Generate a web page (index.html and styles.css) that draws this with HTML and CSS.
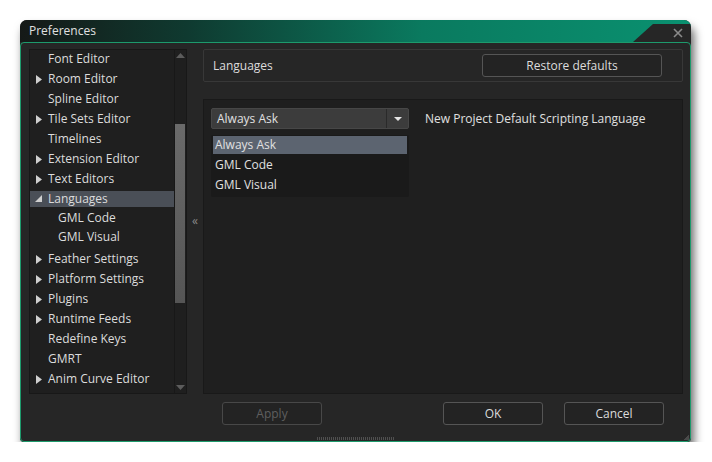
FILE: index.html
```html
<!DOCTYPE html>
<html>
<head>
<meta charset="utf-8">
<link rel="stylesheet" href="styles.css">
</head>
<body>
<div class="window">
  <div class="titlebar">
    <span class="title">Preferences</span>
    <div class="notch">
      <svg class="close" width="10" height="10" viewBox="0 0 10 10"><path d="M1 1L9 9M9 1L1 9" stroke="#8a8a8a" stroke-width="1.6"/></svg>
    </div>
  </div>
  <div class="body">
    <div class="main">
      <div class="tree">
        <div class="tree-list">
          <div class="row"><span class="tw"></span>Font Editor</div>
          <div class="row"><span class="tw"><svg width="6" height="9" viewBox="0 0 6 9"><path d="M0 0L6 4.5L0 9Z" fill="#cfcfcf"/></svg></span>Room Editor</div>
          <div class="row"><span class="tw"></span>Spline Editor</div>
          <div class="row"><span class="tw"><svg width="6" height="9" viewBox="0 0 6 9"><path d="M0 0L6 4.5L0 9Z" fill="#cfcfcf"/></svg></span>Tile Sets Editor</div>
          <div class="row"><span class="tw"></span>Timelines</div>
          <div class="row"><span class="tw"><svg width="6" height="9" viewBox="0 0 6 9"><path d="M0 0L6 4.5L0 9Z" fill="#cfcfcf"/></svg></span>Extension Editor</div>
          <div class="row"><span class="tw"><svg width="6" height="9" viewBox="0 0 6 9"><path d="M0 0L6 4.5L0 9Z" fill="#cfcfcf"/></svg></span>Text Editors</div>
          <div class="row selected"><span class="tw"><svg width="8" height="8" viewBox="0 0 8 8"><path d="M7 0L7 7L0 7Z" fill="#cfcfcf"/></svg></span>Languages</div>
          <div class="row child">GML Code</div>
          <div class="row child tall">GML Visual</div>
          <div class="row gapped"><span class="tw"><svg width="6" height="9" viewBox="0 0 6 9"><path d="M0 0L6 4.5L0 9Z" fill="#cfcfcf"/></svg></span>Feather Settings</div>
          <div class="row"><span class="tw"><svg width="6" height="9" viewBox="0 0 6 9"><path d="M0 0L6 4.5L0 9Z" fill="#cfcfcf"/></svg></span>Platform Settings</div>
          <div class="row"><span class="tw"><svg width="6" height="9" viewBox="0 0 6 9"><path d="M0 0L6 4.5L0 9Z" fill="#cfcfcf"/></svg></span>Plugins</div>
          <div class="row"><span class="tw"><svg width="6" height="9" viewBox="0 0 6 9"><path d="M0 0L6 4.5L0 9Z" fill="#cfcfcf"/></svg></span>Runtime Feeds</div>
          <div class="row"><span class="tw"></span>Redefine Keys</div>
          <div class="row"><span class="tw"></span>GMRT</div>
          <div class="row"><span class="tw"><svg width="6" height="9" viewBox="0 0 6 9"><path d="M0 0L6 4.5L0 9Z" fill="#cfcfcf"/></svg></span>Anim Curve Editor</div>
        </div>
        <div class="scrollbar">
          <svg class="sarrow" width="9" height="5" viewBox="0 0 9 5"><path d="M0 5L4.5 0L9 5Z" fill="#5c5c5c"/></svg>
          <div class="track"><div class="thumb"></div></div>
          <svg class="sarrow" width="9" height="5" viewBox="0 0 9 5"><path d="M0 0L4.5 5L9 0Z" fill="#5c5c5c"/></svg>
        </div>
      </div>
      <div class="splitter">«</div>
      <div class="content">
        <div class="header">
          <span>Languages</span>
          <button class="btn restore">Restore defaults</button>
        </div>
        <div class="panel">
          <div class="field">
            <div class="combo">
              <div class="combo-value">Always Ask</div>
              <div class="combo-arrow"><svg width="8" height="4" viewBox="0 0 8 4"><path d="M0 0L8 0L4 4Z" fill="#e6e6e6"/></svg></div>
              <div class="popup">
                <div class="opt active">Always Ask</div>
                <div class="opt">GML Code</div>
                <div class="opt">GML Visual</div>
              </div>
            </div>
            <span class="label">New Project Default Scripting Language</span>
          </div>
        </div>
      </div>
    </div>
    <div class="buttons">
      <button class="btn dlg disabled">Apply</button>
      <div class="spacer"></div>
      <button class="btn dlg">OK</button>
      <button class="btn dlg">Cancel</button>
    </div>
    <div class="grip"></div>
    <div class="corner"></div>
  </div>
</div>
</body>
</html>
```
FILE: styles.css
```css
html, body {
  margin: 0;
  padding: 0;
  background: #ffffff;
}
body {
  font-family: "Open Sans", "Noto Sans", sans-serif;
  font-size: 12px;
  color: #dcdcdc;
}
.window {
  margin: 20px 0 0 20px;
  width: 671px;
  border-radius: 7px 7px 4px 4px;
  box-shadow: 3px 7px 10px rgba(0,0,0,0.6);
  background: #262626;
}
.titlebar {
  height: 22px;
  display: flex;
  align-items: center;
  border-radius: 7px 7px 0 0;
  background: linear-gradient(90deg, #151917 0%, #0f3a30 25%, #0a7a5f 60%, #0a9170 100%);
  overflow: hidden;
}
.title {
  flex: 1;
  padding-left: 9px;
  color: #e0e0e0;
  font-size: 12px;
  line-height: 22px;
}
.notch {
  width: 58px;
  height: 22px;
  align-self: flex-end;
  background: #262626;
  clip-path: polygon(20px 4px, 100% 4px, 100% 100%, 0 100%);
  border-top-right-radius: 7px;
  display: flex;
  justify-content: flex-end;
  align-items: center;
}
.close {
  margin: 4px 8px 0 0;
}
.body {
  position: relative;
  border: 1px solid #1d9a6c;
  border-radius: 4px;
  background: #262626;
  padding: 6px 0 0 8px;
  box-sizing: border-box;
  height: 400px;
  display: flex;
  flex-direction: column;
}
.main {
  display: flex;
  height: 345px;
}
.tree {
  width: 158px;
  box-sizing: border-box;
  border: 1px solid #181818;
  background: #1f1f1f;
  display: flex;
}
.tree-list {
  flex: 1;
  margin-top: -1px;
}
.row {
  height: 20px;
  line-height: 20px;
  display: flex;
  align-items: center;
  white-space: nowrap;
}
.tw {
  width: 18px;
  flex: none;
  display: flex;
  align-items: center;
  padding-left: 6px;
  box-sizing: border-box;
}
.row.selected {
  background: #4a4f57;
  margin: 2px 0;
  height: 16px;
}
.row.selected .tw {
  padding-left: 5px;
}
.row.child {
  padding-left: 28px;
  height: 18px;
}
.row.child.tall {
  height: 20px;
}
.row.gapped {
  margin-top: 2px;
}
.scrollbar {
  width: 11px;
  border-left: 1px solid #181818;
  display: flex;
  flex-direction: column;
  align-items: center;
}
.sarrow {
  flex: none;
  margin: 3px 0;
}
.track {
  flex: 1;
  width: 100%;
  padding-top: 63px;
}
.thumb {
  width: 10px;
  height: 179px;
  background: linear-gradient(180deg, #6a6a6a, #555555);
}
.splitter {
  width: 16px;
  display: flex;
  align-items: center;
  justify-content: center;
  color: #8a8a8a;
  font-size: 12px;
  padding-bottom: 2px;
}
.content {
  width: 480px;
  display: flex;
  flex-direction: column;
}
.header {
  height: 33px;
  box-sizing: border-box;
  border: 1px solid #383838;
  border-radius: 2px;
  display: flex;
  align-items: center;
  justify-content: space-between;
  padding: 0 20px 0 9px;
}
.btn {
  font-family: "Open Sans", "Noto Sans", sans-serif;
  font-size: 12px;
  color: #dcdcdc;
  background: #232323;
  border: 1px solid #555555;
  border-radius: 3px;
  height: 23px;
  padding: 0;
  box-sizing: border-box;
}
.restore {
  width: 180px;
}
.panel {
  margin-top: 17px;
  height: 295px;
  box-sizing: border-box;
  border: 1px solid #191919;
  background: #1f1f1f;
  padding: 8px 7px;
}
.field {
  display: flex;
  align-items: center;
  gap: 16px;
}
.combo {
  position: relative;
  width: 198px;
  height: 21px;
  display: flex;
  box-sizing: border-box;
  border: 1px solid #474747;
  background: #3c3c3c;
  border-radius: 2px;
}
.combo-value {
  flex: 1;
  padding-left: 5px;
  line-height: 19px;
  color: #e0e0e0;
}
.combo-arrow {
  width: 21px;
  border-left: 1px solid #2a2a2a;
  display: flex;
  align-items: center;
  justify-content: center;
}
.popup {
  position: absolute;
  left: -1px;
  top: 26px;
  width: 198px;
  height: 62px;
  box-sizing: border-box;
  background: #1a1a1a;
  padding: 1px 2px;
  border-radius: 2px;
}
.opt {
  height: 20px;
  line-height: 19px;
  padding-left: 2px;
  color: #e0e0e0;
}
.opt.active {
  background: #5c6470;
  height: 18px;
  line-height: 17px;
  margin-bottom: 1px;
}
.label {
  color: #e0e0e0;
}
.buttons {
  display: flex;
  margin-top: 8px;
  padding-left: 193px;
  padding-right: 26px;
  gap: 21px;
}
.spacer {
  flex: 1;
}
.dlg {
  width: 100px;
}
.dlg.disabled {
  color: #5f5f5f;
  border-color: #484848;
}
.grip {
  position: absolute;
  left: 296px;
  bottom: 1px;
  width: 78px;
  height: 3px;
  background-image: repeating-linear-gradient(90deg, #5a5a5a 0 1px, transparent 1px 2px);
  opacity: 0.8;
}
.corner {
  position: absolute;
  right: 1px;
  bottom: 1px;
  width: 6px;
  height: 6px;
  background: linear-gradient(135deg, transparent 50%, #4a4a4a 50%);
}
```
